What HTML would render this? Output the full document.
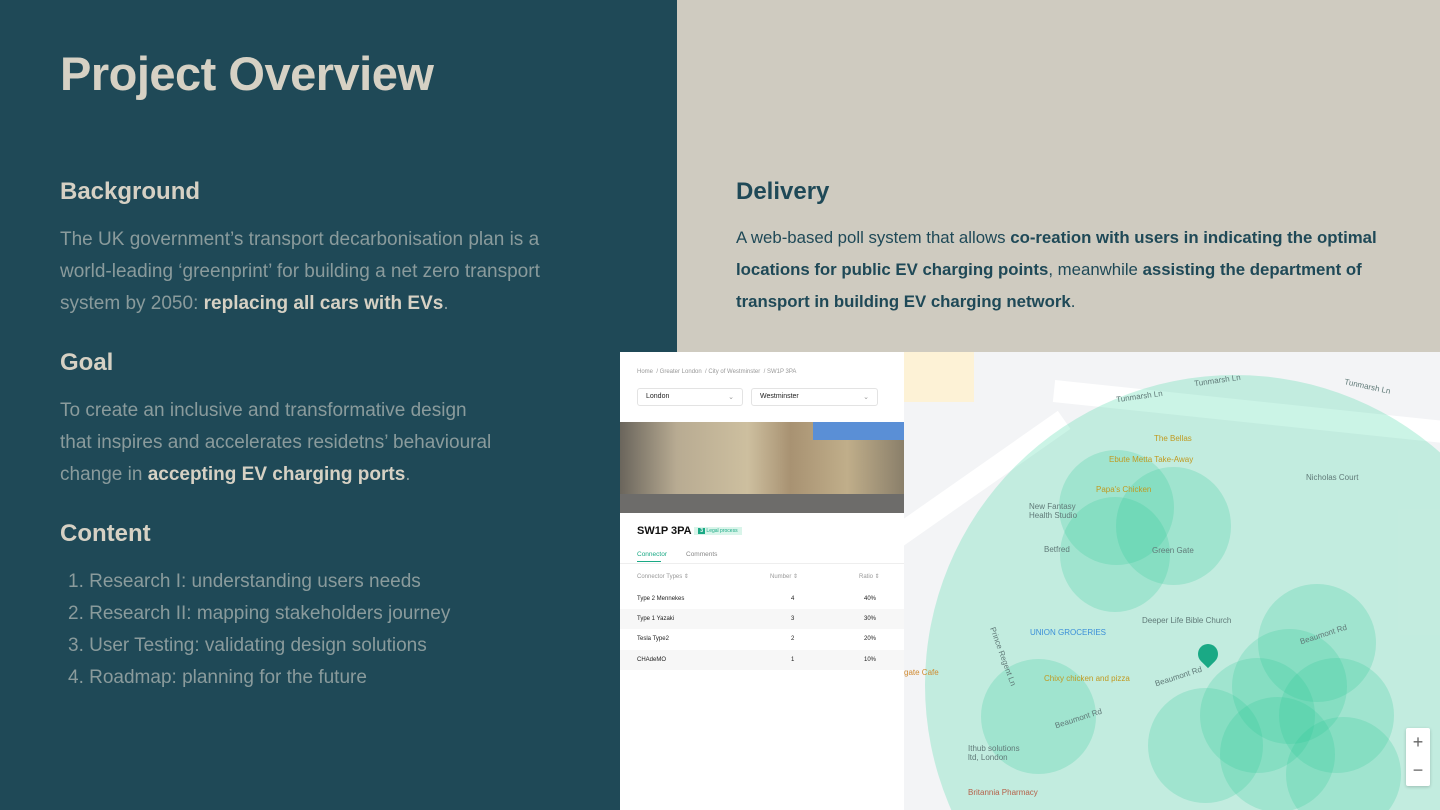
<!DOCTYPE html>
<html><head><meta charset="utf-8"><style>
*{margin:0;padding:0;box-sizing:border-box}
body{width:1440px;height:810px;overflow:hidden;position:relative;background:#1f4957;font-family:"Liberation Sans","Noto Sans CJK SC",sans-serif}
.left{position:absolute;left:0;top:0;width:677px;height:810px;background:#1f4957}
.right{position:absolute;left:677px;top:0;width:763px;height:352px;background:#cfcbc0}
h1{position:absolute;left:60px;top:46px;font-size:47px;font-weight:bold;color:#d6d1c4;letter-spacing:-0.5px}
h2{position:absolute;font-size:24px;font-weight:bold;color:#d6d1c4}
p.b{position:absolute;left:60px;font-size:19px;line-height:32px;color:#8a9b9c;white-space:nowrap}
p.b strong{color:#d6d1c4;font-weight:700}
ol{position:absolute;left:68px;top:566px;font-size:19px;line-height:32px;color:#8a9b9c;list-style:none}
.dh{color:#1f4957;left:736px;top:178px}
.dp{position:absolute;left:736px;top:222px;font-size:16.8px;line-height:32px;color:#1f4957;white-space:nowrap}
.panel{position:absolute;left:620px;top:352px;width:284px;height:458px;background:#fff;font-size:7px;color:#333}
.map{position:absolute;left:904px;top:352px;width:536px;height:458px;background:#f3f4f6;overflow:hidden}
.circ{position:absolute;border-radius:50%;background:rgba(40,200,150,.22)}
.lbl{position:absolute;font-size:8px;color:#607a78}
.sel{position:absolute;top:388px;height:18px;border:1px solid #e3e3e3;border-radius:3px;font-size:7px;padding:4px 8px;color:#222}
.row{position:absolute;left:0;width:284px;height:20px;font-size:6px;color:#222}
.row span{position:absolute;top:7px}
</style></head><body>
<div class="left"></div><div class="right"></div>
<h1>Project Overview</h1>
<h2 style="left:60px;top:178px">Background</h2>
<p class="b" style="top:224px">The UK government’s transport decarbonisation plan is a<br>world-leading ‘greenprint’ for building a net zero transport<br>system by 2050: <strong>replacing all cars with EVs</strong>.</p>
<h2 style="left:60px;top:349px">Goal</h2>
<p class="b" style="top:395px">To create an inclusive and transformative design<br>that inspires and accelerates residetns’ behavioural<br>change in <strong>accepting EV charging ports</strong>.</p>
<h2 style="left:60px;top:520px">Content</h2>
<ol><li>1. Research I: understanding users needs</li><li>2. Research II: mapping stakeholders journey</li><li>3. User Testing: validating design solutions</li><li>4. Roadmap: planning for the future</li></ol>
<h2 class="dh">Delivery</h2>
<p class="dp">A web-based poll system that allows <b>co-reation with users in indicating the optimal</b><br><b>locations for public EV charging points</b>, meanwhile <b>assisting the department of</b><br><b>transport in building EV charging network</b>.</p>

<div class="map">
<div style="position:absolute;left:150px;top:28px;width:450px;height:22px;background:#fff;transform:rotate(6deg);transform-origin:left"></div>
<div style="position:absolute;left:-40px;top:120px;width:220px;height:22px;background:#fff;transform:rotate(-35deg)"></div>
<div style="position:absolute;left:0;top:0;width:70px;height:50px;background:#fdf2d6"></div>
<div class="circ" style="left:21px;top:23px;width:620px;height:620px;background:rgba(70,215,165,.28)"></div>
<div class="circ" style="left:155px;top:98px;width:115px;height:115px"></div>
<div class="circ" style="left:212px;top:115px;width:115px;height:118px"></div>
<div class="circ" style="left:156px;top:145px;width:110px;height:115px"></div>
<div class="circ" style="left:77px;top:307px;width:115px;height:115px"></div>
<div class="circ" style="left:354px;top:232px;width:118px;height:118px"></div>
<div class="circ" style="left:328px;top:277px;width:115px;height:115px"></div>
<div class="circ" style="left:296px;top:306px;width:115px;height:115px"></div>
<div class="circ" style="left:375px;top:306px;width:115px;height:115px"></div>
<div class="circ" style="left:316px;top:345px;width:115px;height:115px"></div>
<div class="circ" style="left:244px;top:336px;width:115px;height:115px"></div>
<div class="circ" style="left:382px;top:365px;width:115px;height:115px"></div>
<div class="lbl" style="left:212px;top:40px;transform:rotate(-8deg)">Tunmarsh Ln</div>
<div class="lbl" style="left:290px;top:24px;transform:rotate(-8deg)">Tunmarsh Ln</div>
<div class="lbl" style="left:440px;top:30px;transform:rotate(12deg)">Tunmarsh Ln</div>
<div class="lbl" style="left:250px;top:82px;color:#c09a20">The Bellas</div>
<div class="lbl" style="left:205px;top:103px;color:#c09a20">Ebute Metta Take-Away</div>
<div class="lbl" style="left:192px;top:133px;color:#c09a20">Papa's Chicken</div>
<div class="lbl" style="left:125px;top:150px">New Fantasy<br>Health Studio</div>
<div class="lbl" style="left:140px;top:193px">Betfred</div>
<div class="lbl" style="left:248px;top:194px">Green Gate</div>
<div class="lbl" style="left:402px;top:121px">Nicholas Court</div>
<div class="lbl" style="left:238px;top:264px">Deeper Life Bible Church</div>
<div class="lbl" style="left:126px;top:276px;color:#3b8fd8">UNION GROCERIES</div>
<div class="lbl" style="left:140px;top:322px;color:#c09a20">Chixy chicken and pizza</div>
<div class="lbl" style="left:0;top:316px;color:#d08a30">gate Cafe</div>
<div class="lbl" style="left:64px;top:392px">Ithub solutions<br>ltd, London</div>
<div class="lbl" style="left:64px;top:436px;color:#b5614a">Britannia Pharmacy</div>
<div class="lbl" style="left:250px;top:320px;transform:rotate(-18deg)">Beaumont Rd</div>
<div class="lbl" style="left:150px;top:362px;transform:rotate(-18deg)">Beaumont Rd</div>
<div class="lbl" style="left:395px;top:278px;transform:rotate(-18deg)">Beaumont Rd</div>
<div class="lbl" style="left:68px;top:300px;transform:rotate(70deg)">Prince Regent Ln</div>
<div style="position:absolute;left:294px;top:292px;width:20px;height:20px;border-radius:50% 50% 50% 0;transform:rotate(-45deg);background:#1aa985"></div>
<div style="position:absolute;left:502px;top:376px;width:24px;height:58px;background:#fff;border-radius:2px;box-shadow:0 1px 3px rgba(0,0,0,.2);font-size:18px;color:#666;text-align:center;line-height:28px">+<br>−</div>
</div>

<div class="panel">
<div style="position:absolute;left:17px;top:17px;font-size:6px;color:#999">Home &nbsp;/ Greater London &nbsp;/ City of Westminster &nbsp;/ SW1P 3PA</div>
<div class="sel" style="left:17px;top:36px;width:106px">London<span style="float:right;color:#999">⌄</span></div>
<div class="sel" style="left:131px;top:36px;width:127px">Westminster<span style="float:right;color:#999">⌄</span></div>
<div style="position:absolute;left:0;top:70px;width:284px;height:91px;background:linear-gradient(90deg,#6a655c 0%,#b8ab92 20%,#cdbf9f 45%,#a89272 60%,#c0ae8a 80%,#8a7f6a 100%)">
<div style="position:absolute;left:193px;top:0;width:91px;height:18px;background:#5a8fd6"></div>
<div style="position:absolute;left:0;top:72px;width:284px;height:19px;background:#6d6c6a"></div></div>
<div style="position:absolute;left:17px;top:173px;font-size:11px;font-weight:bold;color:#111">SW1P 3PA <span style="font-size:5px;background:#d9f5ea;color:#1aa985;padding:1px 4px;font-weight:normal;vertical-align:middle"><b style="background:#1aa985;color:#fff;padding:0 2px">3</b> Legal process</span></div>
<div style="position:absolute;left:17px;top:199px;font-size:6.5px;color:#1aa985">Connector</div>
<div style="position:absolute;left:66px;top:199px;font-size:6.5px;color:#888">Comments</div>
<div style="position:absolute;left:17px;top:209px;width:24px;height:1px;background:#1aa985"></div>
<div style="position:absolute;left:0;top:211px;width:284px;height:1px;background:#eee"></div>
<div class="row" style="top:214px;color:#999"><span style="left:17px">Connector Types ⇕</span><span style="left:150px">Number ⇕</span><span style="left:239px">Ratio ⇕</span></div>
<div class="row" style="top:237px"><span style="left:17px">Type 2 Mennekes</span><span style="left:171px">4</span><span style="left:244px">40%</span></div>
<div class="row" style="top:257px;background:#f7f7f7"><span style="left:17px">Type 1 Yazaki</span><span style="left:171px">3</span><span style="left:244px">30%</span></div>
<div class="row" style="top:277px"><span style="left:17px">Tesla Type2</span><span style="left:171px">2</span><span style="left:244px">20%</span></div>
<div class="row" style="top:298px;background:#f7f7f7"><span style="left:17px">CHAdeMO</span><span style="left:171px">1</span><span style="left:244px">10%</span></div>
</div>
</body></html>
